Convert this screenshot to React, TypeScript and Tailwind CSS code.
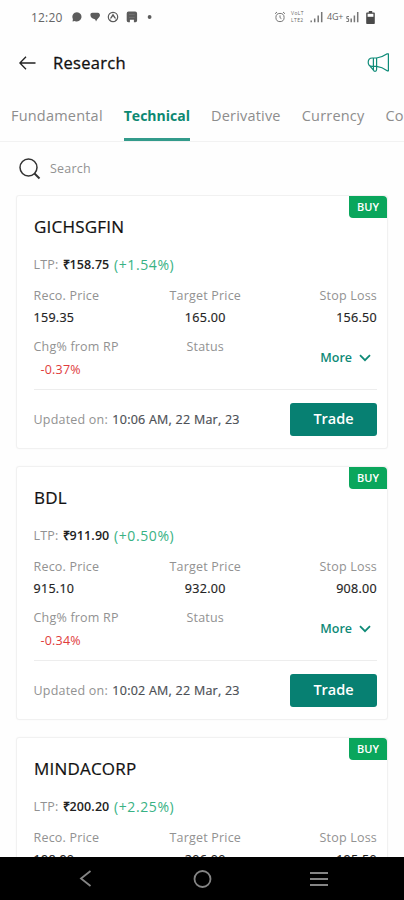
const TABS = ['Fundamental', 'Technical', 'Derivative', 'Currency', 'Commodity'];

type Reco = {
  symbol: string;
  ltp: string;
  change: string;
  reco: string;
  target: string;
  stopLoss: string;
  chg: string;
  updated: string;
};

const RECOS: Reco[] = [
  { symbol: 'GICHSGFIN', ltp: '158.75', change: '+1.54%', reco: '159.35', target: '165.00', stopLoss: '156.50', chg: '-0.37%', updated: '10:06 AM, 22 Mar, 23' },
  { symbol: 'BDL', ltp: '911.90', change: '+0.50%', reco: '915.10', target: '932.00', stopLoss: '908.00', chg: '-0.34%', updated: '10:02 AM, 22 Mar, 23' },
  { symbol: 'MINDACORP', ltp: '200.20', change: '+2.25%', reco: '198.90', target: '206.00', stopLoss: '195.50', chg: '-0.65%', updated: '09:58 AM, 22 Mar, 23' },
];

function StatusBar() {
  return (
    <div className="flex h-[34px] shrink-0 items-center pl-[31px] pr-[29px] text-[#666]">
      <span className="w-[41px] pt-px text-[12px] tracking-[0.2px]">12:20</span>
      <svg width="82" height="12" viewBox="0 0 82 12" fill="#5c5c5c">
        <path d="M5 1.2a4.6 4.6 0 1 1-2.2 8.7L.6 10.4l.3-2.4A4.6 4.6 0 0 1 5 1.2z" />
        <path d="M20.5 1.8h5.2a2.3 2.3 0 0 1 2 3.4c-.5 1.4-2.2 2.2-3.7 5.2-.4-1.4-.8-2.200-1.800-2.400-2-.4-3.600-1.400-3.700-3.400a2.300 2.300 0 0 1 2-2.800z" />
        <circle cx="41" cy="6" r="4.7" fill="none" stroke="#5c5c5c" strokeWidth="1.2" />
        <path d="M41 2.4 44.2 7.6h-1.6L41 5.2l-1.6 2.4h-1.6zM36.6 8.4h2l1 2.2zM45.4 8.4h-2l-1 2.2z" />
        <path d="M56.5.6h6.6a2 2 0 0 1 2 2v7a1.6 1.6 0 0 1-1.6 1.6h-1.6V8.8h-4v2.4h-1.6a1.6 1.6 0 0 1-1.6-1.6v-7a2 2 0 0 1 1.8-2z" />
        <path d="M57 3.4h5.6M57 6.4h5.6" stroke="#7a7a7a" strokeWidth=".8" />
        <circle cx="77.6" cy="6" r="1.9" />
      </svg>
      <div className="ml-auto flex items-center">
        <svg width="12" height="12" viewBox="0 0 12 12" fill="none" stroke="#777" strokeWidth="1">
          <circle cx="6" cy="6.5" r="4.1" />
          <path d="M6 4.4v2.3l1.4.9M1 2.8 3 1M11 2.8 9 1" />
        </svg>
        <div className="ml-[5px] flex w-[16px] flex-col text-[5px] leading-[7px] tracking-[0.4px]">
          <span>VoLT</span>
          <span>LTE2</span>
        </div>
        <svg className="ml-[3px]" width="13" height="12" viewBox="0 0 13 12" stroke="#777" strokeWidth="1.5">
          <path d="M1.2 11.2V9.6M4.7 11.2V7.4M8.2 11.2V4.4M11.7 11.2V1" />
        </svg>
        <span className="ml-[4px] w-[17px] text-[9px] tracking-[-0.2px] whitespace-nowrap">4G+</span>
        <svg className="ml-[2px]" width="13" height="12" viewBox="0 0 13 12" stroke="#777" strokeWidth="1.5">
          <path d="M5.2 11.2V7.4M8.4 11.2V4.4M11.7 11.2V1" />
          <path d="M3 5.5H.8v2.200h1.800v2.800H.4" strokeWidth="1" fill="none" />
        </svg>
        <svg className="ml-[7px]" width="9" height="13" viewBox="0 0 9 13">
          <path d="M2.8 0h3.4v1.4H8a.8.8 0 0 1 .8.8v10a.8.8 0 0 1-.8.8H1a.8.8 0 0 1-.8-.8v-10A.8.8 0 0 1 1 1.4h1.8z" fill="#4a4a4a" />
          <path d="M1.6 2.8h5.8v3H1.6z" fill="#fff" />
        </svg>
      </div>
    </div>
  );
}

function Header() {
  return (
    <div className="flex h-[57px] shrink-0 items-center pl-[19px] pr-[14px]">
      <svg width="17" height="14" viewBox="0 0 17 14" fill="none" stroke="#222" strokeWidth="1.3">
        <path d="M16.5 7H1M7 .8.9 7 7 13.2" />
      </svg>
      <h1 className="ml-[17px] text-[16.5px] leading-6 font-medium tracking-[0.3px] text-[#111] [-webkit-text-stroke:0.3px]">Research</h1>
      <svg className="ml-auto" width="23" height="20" viewBox="0 0 23 20" fill="none" stroke="#0e8b78" strokeWidth="1.2" strokeLinejoin="round">
        <path d="M9.6 5H5.200C2.600 5 1.200 6.800 1.200 9.200s1.400 4.200 4 4.200h4.400z" />
        <path d="M9.600 5c4-.4 7.400-2 10.600-4.200h1.200v17h-1.200C17 15.400 13.600 13.800 9.600 13.400" />
        <path d="M6.400 5v11.600c0 2.400 3.200 2.400 3.200 0v-3.200M3 13.200l3.400 4" />
      </svg>
    </div>
  );
}

function Tabs() {
  return (
    <div className="flex h-[51px] shrink-0 gap-[21px] overflow-hidden border-b border-[#f2f2f2] pl-[11px] whitespace-nowrap">
      {TABS.map(t => (
        <div
          key={t}
          className={
            t === 'Technical'
              ? 'flex h-[50px] shrink-0 flex-col justify-between text-[14px] font-bold text-[#0c8872]'
              : 'flex h-[50px] shrink-0 flex-col justify-between text-[14.5px] tracking-[0.2px] text-[#8d8d8d]'
          }
        >
          <span className="pt-[15px] leading-5">{t}</span>
          {t === 'Technical' && <span className="h-[3px] bg-[#339b8b]" />}
        </div>
      ))}
    </div>
  );
}

function Field({ label, value, align }: { label: string; value: string; align: string }) {
  return (
    <div className={align}>
      <div className="h-[22px] text-[12.5px] leading-[22px] tracking-[0.2px] text-[#929292]">{label}</div>
      <div className="h-[22px] text-[12.5px] leading-[22px] font-medium tracking-[0.3px] text-[#222] [-webkit-text-stroke:0.2px]">{value}</div>
    </div>
  );
}

function Card({ r }: { r: Reco }) {
  return (
    <div className="mb-[17px] h-[254px] shrink-0 rounded-[3px] border border-[#f1f1f1] bg-white shadow-[0_0_2px_rgba(0,0,0,0.03)]">
      <div className="flex h-[42px] justify-between pl-[17px]">
        <h2 className="pt-[19px] text-[17px] leading-6 font-medium tracking-[0.2px] text-[#111] [-webkit-text-stroke:0.2px]">{r.symbol}</h2>
        <span className="flex h-[22px] w-[38px] items-center justify-center rounded-tr-[4px] rounded-bl-[4px] bg-[#0aa65c] text-[11px] font-semibold text-white">
          BUY
        </span>
      </div>
      <div className="pr-[10px] pl-[16.5px]">
        <p className="mt-[16px] flex text-[12.5px] leading-[22px] whitespace-nowrap">
          <span className="w-[29px] tracking-[0.2px] text-[#929292]">LTP:</span>
          <span className="w-[51.5px] font-semibold tracking-[0.1px] text-[#222]">₹{r.ltp}</span>
          <span className="text-[14px] tracking-[0.6px] text-[#38b284]">({r.change})</span>
        </p>
        <div className="mt-[9px] grid grid-cols-3">
          <Field label="Reco. Price" value={r.reco} align="text-left" />
          <Field label="Target Price" value={r.target} align="text-center" />
          <Field label="Stop Loss" value={r.stopLoss} align="text-right" />
        </div>
        <div className="mt-[6px] grid h-[55px] grid-cols-3 border-b border-[#ededed] text-[12.5px] leading-[23px]">
          <div>
            <div className="tracking-[0.2px] text-[#929292]">Chg% from RP</div>
            <div className="pl-[7px] tracking-[0.2px] text-[#e03c3c]">{r.chg}</div>
          </div>
          <div className="text-center tracking-[0.2px] text-[#929292]">Status</div>
          <button className="flex h-[45px] items-center justify-end pr-[6px] font-semibold text-[#0f8a77]">
            More
            <svg className="ml-[7px]" width="12" height="8" viewBox="0 0 12 8" fill="none" stroke="#0f8a77" strokeWidth="1.800">
              <path d="M1 1.200l5 5 5-5" />
            </svg>
          </button>
        </div>
        <div className="flex h-[58px] items-center justify-between">
          <p className="pt-[2px] text-[12.5px] tracking-[0.2px] whitespace-nowrap text-[#929292]">
            Updated on: <span className="ml-px font-medium tracking-[0.25px] text-[#4c4f55] [-webkit-text-stroke:0.2px]">{r.updated}</span>
          </p>
          <button className="h-[33px] w-[87px] rounded-[3px] bg-[#078072] text-[14.5px] font-semibold text-white">Trade</button>
        </div>
      </div>
    </div>
  );
}

function NavBar() {
  return (
    <div className="flex h-[43px] shrink-0 items-center bg-black pl-[79px]">
      <svg width="250" height="20" viewBox="0 0 250 20" fill="none" stroke="#858585" strokeWidth="1.800">
        <path d="M11.5 2 2 9.5l9.500 7.500" />
        <circle cx="123.5" cy="10" r="8" />
        <path d="M231 4h18M231 10h18M231 16h18" strokeWidth="2" />
      </svg>
    </div>
  );
}

export default function App() {
  return (
    <div className="flex h-[900px] w-[404px] flex-col overflow-hidden bg-[#fefefe] font-['Open_Sans',sans-serif]">
      <StatusBar />
      <Header />
      <Tabs />
      <div className="flex h-[53px] shrink-0 items-center pl-[19px]">
        <svg width="22" height="22" viewBox="0 0 22 22" fill="none" stroke="#333" strokeWidth="1.5">
          <circle cx="9.5" cy="9.5" r="8.5" />
          <path d="m15.5 15.5 5 5" strokeWidth="2" />
        </svg>
        <span className="ml-[9px] pt-[2px] text-[12.5px] tracking-[0.2px] text-[#929292]">Search</span>
      </div>
      <div className="flex min-h-0 flex-1 flex-col overflow-hidden pr-[16px] pl-[16px]">
        {RECOS.map(r => (
          <Card key={r.symbol} r={r} />
        ))}
      </div>
      <NavBar />
    </div>
  );
}
